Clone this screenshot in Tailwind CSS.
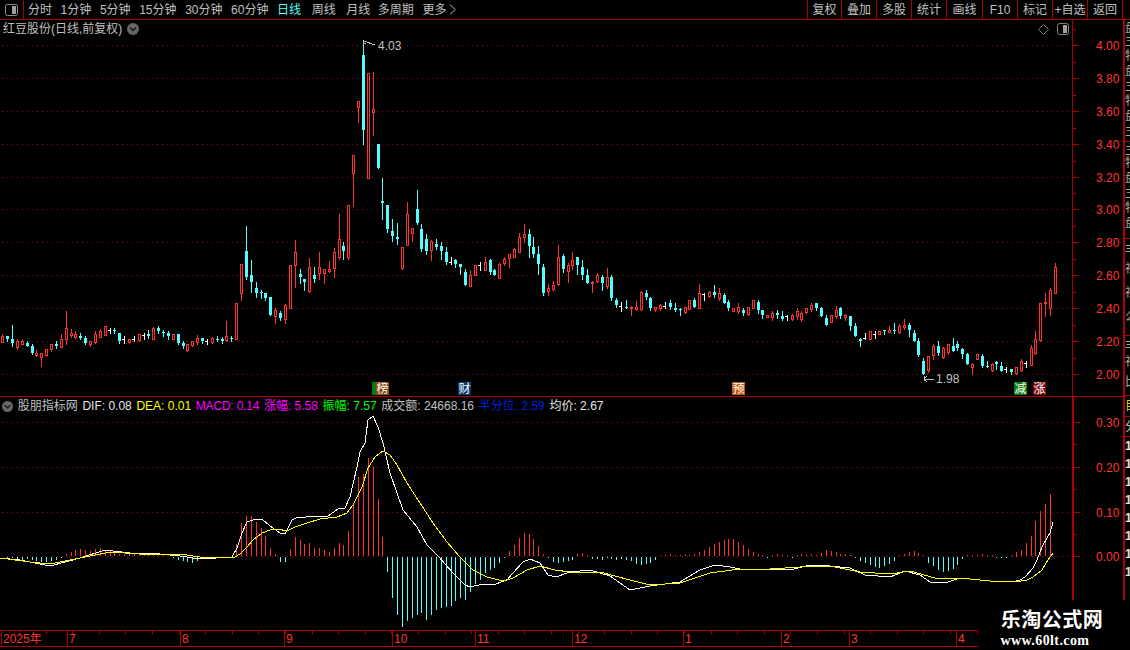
<!DOCTYPE html>
<html lang="zh">
<head>
<meta charset="UTF-8">
<title>红豆股份 日线</title>
<script src="https://cdn.jsdelivr.net/npm/@tailwindcss/browser@4"></script>
</head>
<body class="bg-black">
<div class="relative w-[1130px] h-[650px] overflow-hidden bg-black text-[12px] leading-none text-[#c0c0c0] font-['Liberation_Sans','Noto_Sans_CJK_SC',sans-serif]">

  <!-- top toolbar -->
  <header class="flex h-[20px] border-b border-[#aa0000]">
    <div class="flex w-[24px] items-center justify-center border-r border-[#aa0000]">
      <svg width="13" height="12" viewBox="0 0 13 12"><rect x="0.5" y="0.5" width="12" height="11" rx="2" fill="none" stroke="#909090"/><rect x="7" y="2" width="4" height="8" fill="#a0a0a0"/></svg>
    </div>
    <nav class="flex items-center gap-[8.6px] pl-[4px]">
      <span>分时</span><span>1分钟</span><span>5分钟</span><span>15分钟</span><span>30分钟</span><span>60分钟</span>
      <span class="text-[#54ffff]">日线</span><span class="ml-[2px]">周线</span><span class="ml-[2px]">月线</span><span class="ml-[-1px]">多周期</span>
      <span class="flex items-center gap-[3px]">更多
        <svg width="7" height="11" viewBox="0 0 7 11"><path d="M1 0.5 L6 5.5 L1 10.5" fill="none" stroke="#c0c0c0"/></svg>
      </span>
    </nav>
    <div class="ml-auto flex h-full pr-[7px]">
      <span class="flex w-[34px] items-center justify-center border-l border-[#aa0000]">复权</span>
      <span class="flex w-[35px] items-center justify-center border-l border-[#aa0000]">叠加</span>
      <span class="flex w-[35px] items-center justify-center border-l border-[#aa0000]">多股</span>
      <span class="flex w-[35px] items-center justify-center border-l border-[#aa0000]">统计</span>
      <span class="flex w-[36px] items-center justify-center border-l border-[#aa0000]">画线</span>
      <span class="flex w-[35px] items-center justify-center border-l border-[#aa0000]">F10</span>
      <span class="flex w-[35px] items-center justify-center border-l border-[#aa0000]">标记</span>
      <span class="flex w-[35px] items-center justify-center border-l border-[#aa0000]">+自选</span>
      <span class="flex w-[36px] items-center justify-center border-x border-[#aa0000]">返回</span>
    </div>
  </header>

  <div class="flex">
    <div class="w-[1123px] shrink-0">

      <!-- price panel -->
      <section class="flex h-[377px] border-b border-[#aa0000]">
        <div class="relative w-[1072px] shrink-0">
          <svg id="price" class="block" width="1072" height="376" viewBox="0 20 1072 376" shape-rendering="crispEdges"></svg>
          <div class="absolute left-[3px] top-[3px] flex items-center gap-[5px]">
            <span>红豆股份(日线,前复权)</span>
            <svg width="12" height="12" viewBox="0 0 12 12"><circle cx="6" cy="6" r="6" fill="#666"/><path d="M3 4.5 L6 7.5 L9 4.5" fill="none" stroke="#111" stroke-width="1.3"/></svg>
          </div>
          <div class="absolute right-[3px] top-[3px] flex items-center gap-[8px]">
            <svg width="11" height="11" viewBox="0 0 11 11"><path d="M5.5 0.5 L10.5 5.5 L5.5 10.5 L0.5 5.5 Z" fill="none" stroke="#777"/></svg>
            <svg width="12" height="12" viewBox="0 0 12 12"><rect x="0.5" y="0.5" width="11" height="11" rx="2" fill="none" stroke="#808080"/><rect x="6" y="2" width="4" height="8" fill="#a0a0a0"/></svg>
          </div>
        </div>
        <div class="w-[51px] border-l border-[#aa0000]">
          <svg id="priceAxis" class="block" width="50" height="376" viewBox="1073 20 50 376" fill="#ff3333"></svg>
        </div>
      </section>

      <!-- indicator panel -->
      <section class="flex h-[233px]">
        <div class="relative w-[1072px] shrink-0">
          <svg id="macd" class="block" width="1072" height="233" viewBox="0 397 1072 233" shape-rendering="crispEdges"></svg>
          <div class="absolute left-[2px] top-[3px] flex items-center gap-[4.7px] whitespace-nowrap">
            <svg width="11" height="11" viewBox="0 0 12 12"><circle cx="6" cy="6" r="6" fill="#666"/><path d="M3 4.5 L6 7.5 L9 4.5" fill="none" stroke="#111" stroke-width="1.3"/></svg>
            <span>股朋指标网</span>
            <span class="text-[#e8e8e8]">DIF: 0.08</span>
            <span class="text-[#ffff00]">DEA: 0.01</span>
            <span class="tracking-[-0.2px] text-[#ff00ff]">MACD: 0.14</span>
            <span class="text-[#ff00ff]">涨幅: 5.58</span>
            <span class="text-[#00ff00]">振幅: 7.57</span>
            <span class="text-[#c0c0c0]">成交额: 24668.16</span>
            <span class="text-[#0022dd]">半分位: 2.59</span>
            <span class="text-[#e8e8e8]">均价: 2.67</span>
          </div>
        </div>
        <div class="w-[51px] border-l-2 border-[#aa0000]">
          <svg id="macdAxis" class="block" width="49" height="233" viewBox="1074 397 49 233" fill="#ff3333"></svg>
        </div>
      </section>

      <!-- time axis -->
      <svg id="timeAxis" class="block border-y border-[#aa0000] box-content" width="1123" height="15" viewBox="0 632 1123 15" fill="#ff3333" font-size="12"></svg>
    </div>

    <!-- clipped right side list -->
    <aside class="h-[580px] w-[7px] overflow-hidden border-l-2 border-[#aa0000] text-[12px] text-[#a8a8a8]">
      <div class="flex h-[122px] flex-col overflow-hidden border-b border-[#aa0000]"><span class="h-[15px] shrink-0 pt-[2px]">盘</span><span class="h-[15px] shrink-0">主</span><span class="h-[15px] shrink-0">特</span><span class="h-[15px] shrink-0">盘</span><span class="h-[15px] shrink-0">主</span><span class="h-[15px] shrink-0">特</span><span class="h-[15px] shrink-0">盘</span><span class="h-[15px] shrink-0">主</span></div>
      <div class="flex h-[97px] flex-col overflow-hidden border-b border-[#aa0000]"><span class="h-[15px] shrink-0 pt-[2px]">主</span><span class="h-[15px] shrink-0">特</span><span class="h-[15px] shrink-0">盘</span><span class="h-[15px] shrink-0">主</span><span class="h-[15px] shrink-0">特</span><span class="h-[15px] shrink-0">盘</span></div>
      <div class="flex h-[97px] flex-col overflow-hidden border-b border-[#aa0000]"><span class="h-[24px] shrink-0 pt-[5px]">丰</span><span class="h-[24px] shrink-0">社</span><span class="h-[24px] shrink-0">社</span><span class="h-[24px] shrink-0">么</span></div>
      <div class="flex h-[60px] flex-col overflow-hidden border-b border-[#aa0000]"><span class="h-[20px] shrink-0 pt-[4px]">丰</span><span class="h-[20px] shrink-0">社</span><span class="h-[20px] shrink-0">比</span></div>
      <div class="flex h-[21px] items-center overflow-hidden border-b border-[#aa0000] text-[#d8d800]">目</div>
      <div class="flex h-[20px] items-center overflow-hidden border-b border-[#aa0000] text-[#c0c0c0]">分</div>
      <div class="flex flex-col font-bold text-[#e0e0e0]">
        <span class="h-[18px] pt-[3px]">1</span><span class="h-[18px] pt-[3px]">1</span><span class="h-[18px] pt-[3px]">1</span><span class="h-[18px] pt-[3px]">1</span><span class="h-[18px] pt-[3px]">1</span><span class="h-[18px] pt-[3px]">1</span><span class="h-[18px] pt-[3px]">1</span><span class="h-[18px] pt-[3px]">1</span>
      </div>
    </aside>
  </div>

  <!-- watermark -->
  <div class="absolute bottom-0 right-0 flex h-[50px] w-[152px] flex-col items-center bg-black pt-[9px] text-white">
    <span class="ml-[-4px] text-[20px] font-bold leading-[22px] tracking-[0.5px]">乐淘公式网</span>
    <span class="ml-[-18px] mt-[2px] text-[14px] font-bold leading-[16px] tracking-[0.4px] font-['Liberation_Serif',serif]">www.60lt.com</span>
  </div>
</div>

<script>
// candles: high, body top, body bottom, low (page y) and type r / c / w
const candles = [
[334,336,342,342,'r'],[336,336,339,341,'c'],[325,339,343,346,'c'],[339,341,347,349,'r'],[340,341,344,344,'r'],[341,343,346,346,'c'],[344,346,353,354,'c'],[350,353,355,356,'r'],[353,353,357,366,'r'],[349,349,355,356,'r'],
[344,344,349,351,'r'],[341,344,346,348,'c'],[334,339,347,347,'r'],[311,328,339,344,'r'],[329,333,335,337,'r'],[331,334,337,338,'r'],[333,336,338,339,'c'],[336,338,343,344,'c'],[341,341,344,346,'r'],[331,334,342,343,'r'],
[329,331,337,337,'r'],[326,326,335,335,'r'],[328,330,331,333,'w'],[328,330,331,333,'c'],[333,333,341,343,'c'],[336,339,340,343,'w'],[339,339,342,343,'r'],[336,339,339,341,'w'],[334,334,340,341,'r'],[333,335,335,339,'w'],
[330,334,336,338,'c'],[327,328,339,339,'r'],[326,328,331,333,'c'],[330,332,333,336,'c'],[331,333,336,339,'c'],[334,334,339,339,'r'],[334,334,343,344,'c'],[341,343,346,348,'c'],[344,344,350,351,'r'],[341,341,345,346,'r'],
[335,338,342,344,'r'],[338,338,341,343,'c'],[339,341,341,344,'w'],[337,338,342,343,'r'],[336,339,340,341,'c'],[337,339,341,343,'c'],[321,336,340,341,'r'],[336,338,339,341,'c'],[303,303,339,339,'r'],[264,264,293,300,'r'],
[226,251,277,279,'c'],[260,275,282,292,'c'],[282,288,293,297,'c'],[290,292,293,298,'c'],[293,293,298,300,'c'],[297,297,315,315,'c'],[308,310,316,323,'r'],[311,313,318,320,'c'],[304,305,319,323,'r'],[265,265,308,308,'r'],
[240,252,265,287,'r'],[269,274,277,283,'c'],[279,279,282,290,'c'],[258,267,291,292,'r'],[267,275,279,282,'c'],[252,267,273,279,'r'],[269,269,273,283,'r'],[261,269,271,272,'r'],[248,252,268,277,'r'],[214,239,257,259,'r'],
[242,246,251,259,'c'],[205,205,257,259,'r'],[155,155,173,206,'r'],[101,101,107,122,'r'],[40,55,130,144,'c'],[73,73,178,178,'r'],[72,109,112,135,'r'],[144,144,168,168,'c'],[178,201,203,219,'c'],[205,205,229,232,'c'],
[219,231,236,241,'c'],[223,237,239,244,'c'],[247,247,268,269,'r'],[202,214,245,245,'r'],[228,228,233,241,'r'],[190,209,223,224,'c'],[224,229,249,251,'c'],[234,239,251,254,'c'],[240,241,250,260,'r'],[239,244,247,249,'c'],
[242,246,251,259,'c'],[247,252,262,264,'c'],[257,262,263,264,'w'],[259,260,264,267,'c'],[264,264,267,274,'c'],[269,272,285,285,'c'],[270,275,286,286,'r'],[265,265,275,275,'r'],[262,265,266,270,'w'],[257,262,270,270,'r'],
[259,260,272,274,'c'],[269,270,275,275,'c'],[263,264,278,278,'r'],[257,259,263,265,'r'],[254,254,258,267,'r'],[248,249,257,257,'r'],[233,237,252,252,'r'],[224,234,237,242,'r'],[229,234,246,257,'c'],[237,247,254,257,'c'],
[246,254,264,274,'c'],[264,267,293,295,'c'],[284,288,291,295,'r'],[281,285,289,290,'r'],[245,257,284,285,'r'],[254,256,269,272,'c'],[263,265,271,282,'r'],[252,260,265,269,'r'],[257,257,265,274,'c'],[260,267,275,279,'c'],
[269,275,283,283,'c'],[281,282,283,292,'r'],[273,275,281,282,'r'],[275,277,283,290,'c'],[268,277,286,288,'r'],[275,277,298,300,'c'],[298,300,305,307,'c'],[302,306,307,311,'w'],[300,307,308,308,'c'],[306,307,308,315,'r'],
[301,307,309,310,'r'],[291,292,309,310,'r'],[290,293,297,299,'c'],[297,298,308,310,'c'],[307,307,309,311,'r'],[304,305,308,310,'r'],[302,306,307,308,'w'],[300,303,307,309,'c'],[303,308,310,311,'c'],[308,309,310,315,'c'],
[307,307,312,313,'r'],[300,300,309,309,'r'],[298,300,307,307,'c'],[284,293,308,308,'r'],[293,294,295,300,'w'],[291,292,296,297,'r'],[285,292,295,297,'c'],[288,293,298,300,'r'],[293,295,303,303,'c'],[300,302,308,310,'c'],
[308,308,311,311,'r'],[303,307,311,313,'r'],[308,310,313,315,'c'],[307,307,314,315,'r'],[300,300,308,308,'r'],[300,302,310,313,'c'],[310,310,315,318,'c'],[315,315,317,317,'r'],[311,313,317,320,'r'],[310,313,315,318,'c'],
[311,316,319,320,'c'],[315,316,317,320,'w'],[314,315,319,320,'r'],[308,311,316,319,'r'],[311,313,319,321,'r'],[308,308,312,313,'r'],[303,305,309,311,'r'],[303,303,308,310,'c'],[307,308,316,316,'c'],[315,318,325,325,'c'],
[315,315,322,322,'r'],[306,310,316,318,'r'],[307,308,316,318,'c'],[314,315,317,320,'r'],[316,316,326,330,'c'],[323,326,336,336,'c'],[338,339,341,346,'c'],[333,338,339,339,'w'],[331,331,339,339,'r'],[331,334,335,338,'w'],
[331,331,334,334,'r'],[330,330,331,334,'c'],[326,330,332,332,'r'],[323,330,331,333,'c'],[324,326,332,333,'r'],[319,325,327,329,'r'],[323,325,330,336,'c'],[330,333,341,341,'c'],[338,341,355,356,'c'],[358,361,374,374,'c'],
[356,356,370,372,'r'],[344,346,355,359,'r'],[341,346,353,355,'c'],[347,348,357,358,'r'],[344,344,352,354,'r'],[338,346,351,351,'c'],[341,344,348,350,'c'],[348,349,354,358,'c'],[353,354,364,364,'c'],[363,364,367,374,'r'],
[354,354,359,359,'r'],[354,356,366,367,'c'],[361,366,367,367,'c'],[363,364,370,371,'r'],[361,362,364,369,'c'],[362,366,371,371,'c'],[367,369,370,372,'w'],[369,369,372,374,'c'],[367,367,373,374,'r'],[359,361,370,371,'r'],
[361,363,364,367,'w'],[345,348,365,365,'r'],[331,339,353,354,'r'],[303,303,340,341,'r'],[293,302,303,316,'r'],[288,290,308,315,'r'],[263,267,293,293,'r']
];

// macd bar height above (+) or below (-) the zero line, by candle
const bars = [
0,-1,-1,-2,-3,-2,-3,-4,-5,-5,-4,-3,-1,2,4,6,7,6,5,7,8,6,6,4,2,2,3,2,2,3,2,1,1,2,1,-1,-3,-4,-5,-6,-4,-2,-1,-2,-1,-1,-1,-1,
12,33,40,40,34,28,20,8,2,-5,-5,7,19,16,12,13,8,8,6,4,8,13,11,25,51,79,82,98,89,57,19,-15,-41,-58,-70,-64,-61,-58,-56,-63,-58,-53,-51,-50,-49,-44,-41,-43,-35,-27,-23,-16,-13,-11,-6,-1,5,11,18,23,22,17,10,
2,-1,-5,-6,-5,-4,-3,2,3,1,-2,-2,-3,-1,-2,-3,-2,-3,-4,-7,-8,-7,-6,-3,1,1,2,1,1,2,1,2,4,6,9,12,14,16,17,17,14,11,7,4,2,1,-1,1,2,1,1,-1,1,2,1,2,1,3,6,5,4,2,2,1,-1,-4,-6,-8,-10,-11,-9,-7,-4,1,2,4,5,3,1,-6,-9,-13,-15,-14,-12,-8,-2,1,1,1,2,1,1,-1,-1,-1,1,4.5,6,13,20,35,45,52,62
];

const dif = [[0,558],[20,560],[35,563],[50,566],[65,562],[80,558],[105,550],[130,553],[160,554],[180,556],[200,559],[232,557],[237,548],[242,533],[247,522],[253,520],[262,519],[270,526],[280,533],[285,534],[292,520],[298,517],[303,518],[309,516],[315,517],[328,516],[338,509],[345,508],[350,497],[357,467],[360,452],[365,443],[368,420],[373,416],[378,427],[383,443],[390,473],[397,493],[403,510],[417,527],[427,545],[438,556],[453,573],[465,585],[470,587],[483,584],[493,585],[507,580],[513,573],[523,562],[530,559],[540,563],[548,575],[556,577],[570,572],[590,570],[610,576],[630,590],[650,586],[680,582],[700,570],[715,565],[730,567],[745,570],[770,569],[790,570],[810,565],[830,566],[850,568],[865,575],[890,577],[905,571],[920,575],[930,582],[945,583],[960,578],[990,581],[1013,582],[1020,580],[1025,577],[1033,568],[1037,560],[1042,547],[1047,538],[1050,533],[1053,522]];
const dea = [[0,558],[30,562],[50,564],[80,558],[110,552],[140,554],[180,554],[200,557],[235,557],[240,554],[247,547],[253,540],[262,533],[270,530],[278,529],[287,531],[295,527],[307,523],[320,519],[337,517],[347,513],[353,505],[362,487],[368,468],[375,457],[383,451],[390,455],[397,465],[407,483],[420,503],[433,523],[447,542],[460,557],[473,570],[487,577],[503,581],[513,578],[527,570],[540,566],[555,570],[570,572],[600,572],[630,580],[650,585],[680,583],[710,573],[740,569],[770,569],[800,567],[830,566],[860,572],[890,574],[910,571],[935,578],[960,578],[990,581],[1015,582],[1027,580],[1033,577],[1042,570],[1048,560],[1053,553]];

const RED = '#ff3232', CYAN = '#54ffff', WHITE = '#ffffff';
const slot = i => Math.round(2.3 + 4.873 * i);
const rect = (x, y, w, h, c) => `<rect x="${x}" y="${y}" width="${w}" height="${h}" fill="${c}"/>`;
const dots = (y, w) => `<line x1="2" x2="${w}" y1="${y}.5" y2="${y}.5" stroke="#8a1010" stroke-dasharray="1 4"/>`;
const points = list => list.map(p => p.join(',')).join(' ');

// price panel
let s = '';
[45,78,111,144,177,209,242,275,308,341,374].forEach(y => s += dots(y, 1072));
candles.forEach((d, i) => {
  const [hi, top, bot, lo, type] = d;
  const x = slot(i);
  if (type == 'c') {
    s += rect(x, hi, 1, lo - hi + 1, CYAN) + rect(x - 1, top, 3, Math.max(bot - top, 1), CYAN);
  } else if (type == 'w') {
    s += rect(x, hi, 1, lo - hi + 1, WHITE) + rect(x - 2, top, 2, 1, WHITE);
  } else {
    // hollow body: 3px wide with a black centre
    const h = Math.max(bot - top, 1) + 1;
    s += rect(x, hi, 1, top - hi, RED) + rect(x, bot, 1, lo - bot + 1, RED);
    s += rect(x - 1, top, 3, h, RED) + (h > 2 ? rect(x, top + 1, 1, h - 2, '#000') : '');
  }
});
// high and low markers
s += `<path d="M363 46 V41 H367 M364 43 H366 M367 42 L372 44 L375 45" fill="none" stroke="#c0c0c0"/>`;
s += `<text x="378" y="50" fill="#c0c0c0" font-size="12">4.03</text>`;
s += `<path d="M924 379 H934 M924 379 L927 376 M924 379 L927 382 M924 376 V381" fill="none" stroke="#c0c0c0"/>`;
s += `<text x="936" y="383" fill="#c0c0c0" font-size="12">1.98</text>`;
// event tags
const tag = (x, w, bg, t) => rect(x, 382, w, 13, bg) + `<text x="${x + w - 12.5}" y="393" fill="#fff" font-size="12">${t}</text>`;
s += tag(372, 5, '#0a7a0a', '') + tag(376, 13, '#8a4a10', '榜') + tag(458, 13, '#0a3c6e', '财') + tag(732, 13, '#c05a10', '预') + tag(1014, 13, '#0a7a0a', '减') + tag(1033, 13, '#800a0a', '涨');
document.getElementById('price').innerHTML = s;

// macd panel
let m = '';
[422,467,512,556].forEach(y => m += dots(y, 1072));
bars.forEach((v, i) => {
  if (!v) return;
  const x = slot(i);
  m += v > 0 ? rect(x, Math.round(556 - v), 1, Math.round(v), RED) : rect(x, 557, 1, Math.round(-v), CYAN);
});
m += `<polyline points="${points(dif)}" fill="none" stroke="#ffffff"/>`;
m += `<polyline points="${points(dea)}" fill="none" stroke="#ffff00"/>`;
document.getElementById('macd').innerHTML = m;

// axes
const axisTicks = (list, box) => {
  let a = '';
  list.forEach(t => {
    a += `<rect x="${box}" y="${t[0]}" width="6" height="1" fill="#aa0000"/>`;
    a += `<rect x="${box}" y="${t[0] + t[2]}" width="3" height="1" fill="#aa0000"/>`;
    a += `<text x="1096" y="${t[0] + 5}" font-size="12">${t[1]}</text>`;
  });
  return a;
};
document.getElementById('priceAxis').innerHTML = axisTicks([[45,'4.00',-16],[78,'3.80',-16],[111,'3.60',-16],[144,'3.40',-16],[177,'3.20',-16],[209,'3.00',-16],[242,'2.80',-16],[275,'2.60',-16],[308,'2.40',-16],[341,'2.20',-16],[374,'2.00',-16]], 1073);
document.getElementById('macdAxis').innerHTML = axisTicks([[422,'0.30',22],[467,'0.20',22],[512,'0.10',22],[556,'0.00',-22]], 1074);

// time axis, months and small ticks
let t = '';
const months = [[1,'2025年'],[67,'7'],[180,'8'],[284,'9'],[392,'10'],[475,'11'],[572,'12'],[683,'1'],[781,'2'],[849,'3'],[956,'4']];
months.forEach(p => {
  t += `<rect x="${p[0]}" y="632" width="1" height="15" fill="#aa0000"/>`;
  t += `<text x="${p[0] + 2}" y="644">${p[1]}</text>`;
});
for (let x = 19; x < 978; x += 26.6) t += `<rect x="${Math.round(x)}" y="632" width="1" height="3" fill="#aa0000"/>`;
document.getElementById('timeAxis').innerHTML = t;
</script>
</body>
</html>
